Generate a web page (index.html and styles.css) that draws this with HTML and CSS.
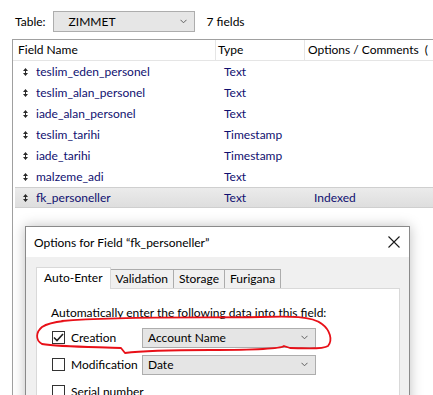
FILE: index.html
```html
<!DOCTYPE html>
<html lang="en">
<head>
    <meta charset="UTF-8">
    <title>Manage Database</title>
    <link rel="stylesheet" href="styles.css">
</head>
<body>
    <div class="table-bar">
        <span>Table:</span>
        <div class="table-select">
            <span>ZIMMET</span>
            <svg class="chev" width="7" height="5" viewBox="0 0 7 5"><path d="M0.5 0.8 L3.5 3.8 L6.5 0.8" fill="none" stroke="#606060" stroke-width="1"/></svg>
        </div>
        <span class="field-count">7 fields</span>
    </div>

    <div class="field-list">
        <div class="list-head">
            <div class="col-name">Field Name</div>
            <div class="col-type">Type</div>
            <div class="col-opts">Options / Comments &nbsp;(</div>
        </div>
        <div class="list-row"><svg class="grip" width="5" height="8" viewBox="0 0 5 8"><path d="M2.5 0 L5 3 L0 3 Z M0 5 L5 5 L2.5 8 Z M2 3 H3 V5 H2 Z" fill="#2a2a2a"/></svg><span class="name">teslim_eden_personel</span><span class="type">Text</span><span class="opts"></span></div>
        <div class="list-row"><svg class="grip" width="5" height="8" viewBox="0 0 5 8"><path d="M2.5 0 L5 3 L0 3 Z M0 5 L5 5 L2.5 8 Z M2 3 H3 V5 H2 Z" fill="#2a2a2a"/></svg><span class="name">teslim_alan_personel</span><span class="type">Text</span><span class="opts"></span></div>
        <div class="list-row"><svg class="grip" width="5" height="8" viewBox="0 0 5 8"><path d="M2.5 0 L5 3 L0 3 Z M0 5 L5 5 L2.5 8 Z M2 3 H3 V5 H2 Z" fill="#2a2a2a"/></svg><span class="name">iade_alan_personel</span><span class="type">Text</span><span class="opts"></span></div>
        <div class="list-row"><svg class="grip" width="5" height="8" viewBox="0 0 5 8"><path d="M2.5 0 L5 3 L0 3 Z M0 5 L5 5 L2.5 8 Z M2 3 H3 V5 H2 Z" fill="#2a2a2a"/></svg><span class="name">teslim_tarihi</span><span class="type">Timestamp</span><span class="opts"></span></div>
        <div class="list-row"><svg class="grip" width="5" height="8" viewBox="0 0 5 8"><path d="M2.5 0 L5 3 L0 3 Z M0 5 L5 5 L2.5 8 Z M2 3 H3 V5 H2 Z" fill="#2a2a2a"/></svg><span class="name">iade_tarihi</span><span class="type">Timestamp</span><span class="opts"></span></div>
        <div class="list-row"><svg class="grip" width="5" height="8" viewBox="0 0 5 8"><path d="M2.5 0 L5 3 L0 3 Z M0 5 L5 5 L2.5 8 Z M2 3 H3 V5 H2 Z" fill="#2a2a2a"/></svg><span class="name">malzeme_adi</span><span class="type">Text</span><span class="opts"></span></div>
        <div class="list-row selected"><svg class="grip" width="5" height="8" viewBox="0 0 5 8"><path d="M2.5 0 L5 3 L0 3 Z M0 5 L5 5 L2.5 8 Z M2 3 H3 V5 H2 Z" fill="#2a2a2a"/></svg><span class="name">fk_personeller</span><span class="type">Text</span><span class="opts">Indexed</span></div>
    </div>

    <div class="dialog">
        <div class="dialog-title">
            <span>Options for Field “fk_personeller”</span>
            <svg class="close" width="12" height="12" viewBox="0 0 12 12"><path d="M0.5 0.5 L11.5 11.5 M11.5 0.5 L0.5 11.5" stroke="#1a1a1a" stroke-width="1.1"/></svg>
        </div>
        <div class="dialog-body">
            <div class="tabs">
                <div class="tab active">Auto-Enter</div>
                <div class="tab">Validation</div>
                <div class="tab">Storage</div>
                <div class="tab">Furigana</div>
            </div>
            <div class="tab-panel">
                <p class="intro">Automatically enter the following data into this field:</p>
                <div class="opt-row">
                    <span class="check on"><svg width="11" height="9" viewBox="0 0 11 9"><path d="M1 4.5 L4 7.5 L10 1" fill="none" stroke="#202020" stroke-width="1.6"/></svg></span>
                    <span class="opt-label">Creation</span>
                    <div class="combo"><span>Account Name</span><svg class="chev" width="7" height="5" viewBox="0 0 7 5"><path d="M0.5 0.8 L3.5 3.8 L6.5 0.8" fill="none" stroke="#606060" stroke-width="1"/></svg></div>
                </div>
                <div class="opt-row">
                    <span class="check"></span>
                    <span class="opt-label">Modification</span>
                    <div class="combo"><span>Date</span><svg class="chev" width="7" height="5" viewBox="0 0 7 5"><path d="M0.5 0.8 L3.5 3.8 L6.5 0.8" fill="none" stroke="#606060" stroke-width="1"/></svg></div>
                </div>
                <div class="opt-row">
                    <span class="check"></span>
                    <span class="opt-label">Serial number</span>
                </div>
            </div>
        </div>
    </div>

    <svg class="scribble" width="433" height="395" viewBox="0 0 433 395">
        <path d="M62 321 C 120 316, 200 318, 260 317 C 290 316, 312 316, 322 324 C 330 330, 333 340, 328 346 C 322 350, 305 348, 290 348 L 284 346 C 280 349, 240 350, 210 350 C 180 350, 140 351, 125 353 L 121 348 C 100 347, 60 347, 42 344 C 35 340, 36 332, 42 327 C 48 323, 55 322, 64 321"
              fill="none" stroke="#e81018" stroke-width="1.8" stroke-linecap="round" stroke-linejoin="round"/>
    </svg>
</body>
</html>
```

FILE: styles.css
```css
body {
    margin: 0;
    width: 433px;
    height: 395px;
    overflow: hidden;
    position: relative;
    background: #ffffff;
    font-family: Lato, "Noto Sans", sans-serif;
    font-size: 12px;
    color: #000000;
}
.table-bar {
    display: flex;
    align-items: center;
    padding: 11px 0 0 15px;
    height: 21px;
}
.table-select {
    display: flex;
    align-items: center;
    justify-content: space-between;
    box-sizing: border-box;
    width: 142px;
    height: 21px;
    margin-left: 7px;
    padding: 0 7px 0 15px;
    background: #e6e6e6;
    border: 1px solid #adadad;
}
.field-count {
    margin-left: 12px;
}
.field-list {
    margin: 7px 0 0 12px;
    width: 460px;
    height: 400px;
    border-left: 1px solid #a0a0a0;
    border-top: 1px solid #a0a0a0;
}
.list-head {
    display: flex;
    height: 20px;
    line-height: 20px;
    white-space: nowrap;
    border-bottom: 1px solid #e5e5e5;
}
.list-head div {
    box-sizing: border-box;
    border-right: 1px solid #e5e5e5;
}
.col-name {
    width: 203px;
    padding-left: 5px;
}
.col-type {
    width: 89px;
    padding-left: 2px;
}
.col-opts {
    flex: 1;
    padding-left: 3px;
}
.list-row {
    display: flex;
    align-items: center;
    height: 21px;
    color: #101070;
}
.list-row .grip {
    flex: none;
    margin: 0 8px 0 10px;
}
.list-row .name {
    width: 188px;
}
.list-row .type {
    width: 90px;
}
.list-row.selected {
    margin-left: 2px;
    height: 19px;
    border-top: 1px solid #cfcfcf;
    border-bottom: 1px solid #cfcfcf;
    background: linear-gradient(#ebebeb, #dedede);
}
.list-row.selected .grip {
    margin-left: 8px;
}
.dialog {
    position: absolute;
    left: 25px;
    top: 226px;
    width: 383px;
    height: 200px;
    border: 1px solid #8a8a8a;
    background: #f0f0f0;
    box-shadow: 0 0 12px rgba(0, 0, 0, 0.25);
}
.dialog-title {
    display: flex;
    align-items: center;
    justify-content: space-between;
    height: 30px;
    padding: 0 9px 0 8px;
    background: #ffffff;
}
.dialog-body {
    padding: 10px 9px 0 10px;
}
.tabs {
    display: flex;
    align-items: flex-end;
    height: 21px;
}
.tab {
    box-sizing: border-box;
    height: 19px;
    line-height: 17px;
    padding: 0 5px;
    margin-right: -1px;
    border: 1px solid #acacac;
    border-bottom: none;
    background: #f0f0f0;
}
.tab.active {
    position: relative;
    z-index: 1;
    height: 22px;
    line-height: 20px;
    margin-bottom: -1px;
    padding: 0 7px;
    background: #ffffff;
    border-color: #d9d9d9;
}
.tab-panel {
    height: 120px;
    padding: 16px 0 0 14px;
    background: #ffffff;
    border: 1px solid #d9d9d9;
}
.intro {
    margin: 0 0 4px 0;
}
.opt-row {
    display: flex;
    align-items: center;
    height: 27px;
    white-space: nowrap;
}
.check {
    display: flex;
    align-items: center;
    justify-content: center;
    box-sizing: border-box;
    width: 13px;
    height: 13px;
    margin-left: 1px;
    border: 1px solid #333333;
    background: #ffffff;
}
.opt-label {
    width: 71px;
    margin-left: 6px;
}
.combo {
    display: flex;
    align-items: center;
    justify-content: space-between;
    box-sizing: border-box;
    width: 174px;
    height: 20px;
    padding: 0 7px 0 5px;
    background: #e5e5e5;
    border: 1px solid #adadad;
}
.scribble {
    position: absolute;
    left: 0;
    top: 0;
    pointer-events: none;
}
```
